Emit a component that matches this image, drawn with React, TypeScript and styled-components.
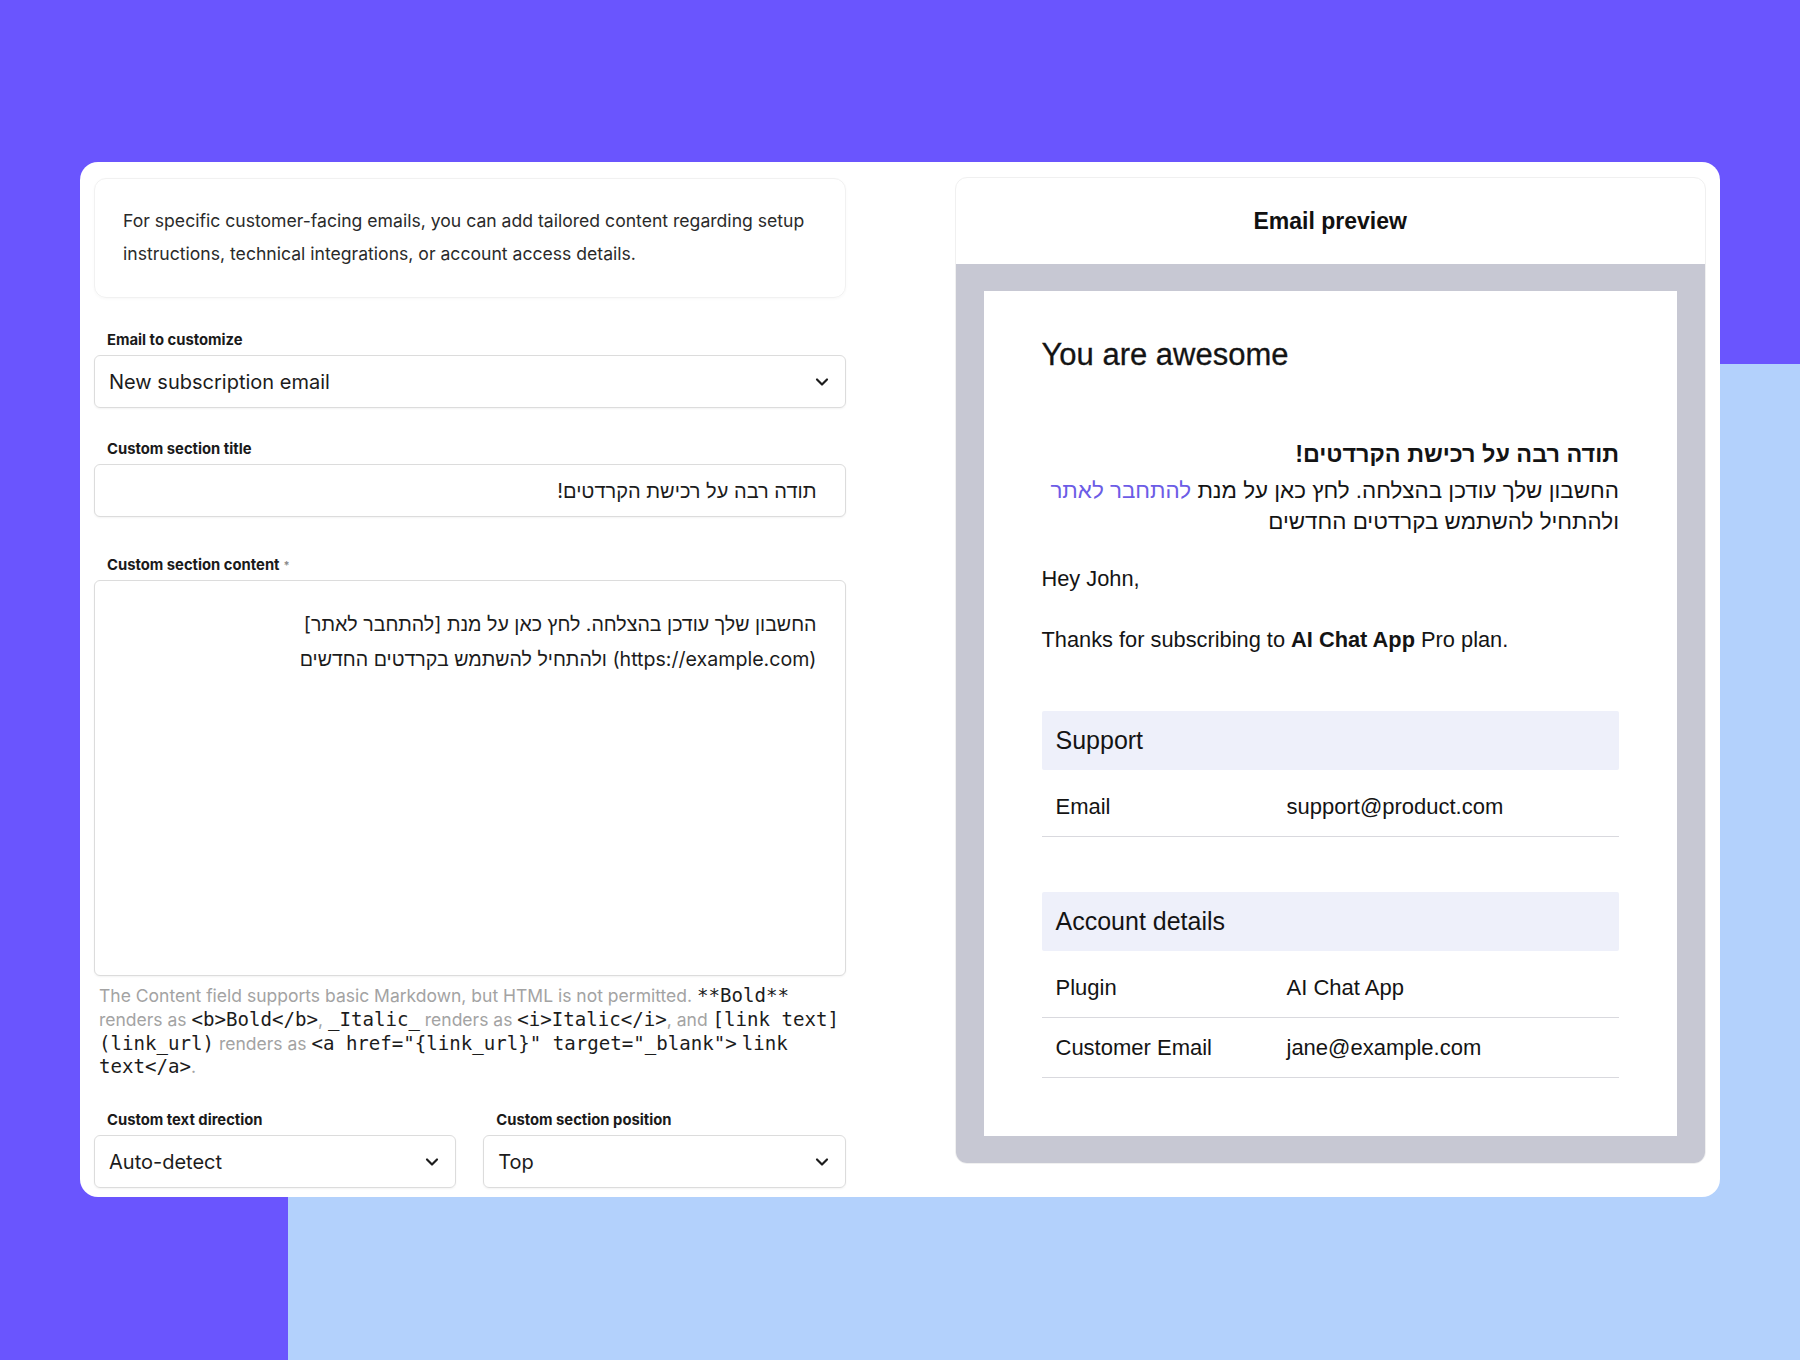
import React from 'react'
import styled, { createGlobalStyle } from 'styled-components'
import { ChevronDown } from 'lucide-react'

const GlobalStyle = createGlobalStyle`
  * {
    box-sizing: border-box;
  }

  body {
    margin: 0;
    min-height: 1360px;
    font-family: Inter, 'Liberation Sans', 'DejaVu Sans', sans-serif;
    color: #151515;
    background:
      linear-gradient(#b3d1fc, #b3d1fc) no-repeat 288px 364px / calc(100% - 288px) calc(100% - 364px),
      #6a55fe;
  }
`

const Page = styled.div`
  padding: 162px 80px 0;
`

const Card = styled.div`
  width: 1640px;
  height: 1035px;
  background: #fff;
  border-radius: 18px;
  padding: 16px 14px 10px;
  display: grid;
  grid-template-columns: 1fr 1fr;
  column-gap: 109px;
  align-items: start;
`

const FormColumn = styled.div`
  display: flex;
  flex-direction: column;
`

const InfoBox = styled.div`
  border: 1px solid #f1f1f1;
  border-radius: 12px;
  padding: 25px 28px 27px;
  font-size: 17.6px;
  line-height: 33px;
  color: #2a2a2a;
  box-shadow: 0 1px 3px rgba(0, 0, 0, 0.03);
`

const Field = styled.div<{ $gap?: number }>`
  display: flex;
  flex-direction: column;
  margin-top: ${(p) => p.$gap ?? 32}px;
  min-width: 0;
`

const Label = styled.label`
  font-size: 14.8px;
  font-weight: 700;
  line-height: 18px;
  color: #1a1a1a;
  padding-left: 13px;
  margin-bottom: 6px;
`

const Required = styled.span`
  color: #8a8a8a;
  font-size: 11px;
  vertical-align: top;
  margin-left: 4px;
`

const SelectBox = styled.div`
  height: 53px;
  border: 1px solid #dcdcdc;
  border-radius: 6px;
  padding: 0 13px 0 14px;
  display: flex;
  align-items: center;
  justify-content: space-between;
  font-size: 20px;
  color: #1c1c1c;
  box-shadow: 0 1px 2px rgba(0, 0, 0, 0.05);
`

const TextInput = styled.input`
  height: 53px;
  border: 1px solid #dcdcdc;
  border-radius: 6px;
  padding: 0 28px;
  font-family: Inter, 'Liberation Sans', sans-serif;
  font-size: 20px;
  color: #1c1c1c;
  outline: none;
  box-shadow: 0 1px 2px rgba(0, 0, 0, 0.05);
`

const TextArea = styled.textarea`
  height: 396px;
  border: 1px solid #dcdcdc;
  border-radius: 6px;
  padding: 26px 28px;
  font-family: Inter, 'Liberation Sans', sans-serif;
  font-size: 19.6px;
  line-height: 35px;
  color: #1c1c1c;
  resize: none;
  outline: none;
  box-shadow: 0 1px 2px rgba(0, 0, 0, 0.05);
`

const Hint = styled.p`
  margin: 8px -10px 0 0;
  padding-left: 5px;
  font-size: 17.5px;
  line-height: 23.8px;
  color: #a3a3a3;
`

const Code = styled.code`
  font-family: 'DejaVu Sans Mono', 'Liberation Mono', monospace;
  font-size: 19.1px;
  line-height: 1;
  color: #1c1c1c;
`

const FieldRow = styled.div`
  display: grid;
  grid-template-columns: 1fr 1fr;
  column-gap: 27px;
`

const PreviewPanel = styled.div`
  border: 1px solid #f0f0f0;
  border-radius: 12px;
  overflow: hidden;
  margin-top: -1px;
`

const PreviewHeader = styled.div`
  height: 86px;
  display: flex;
  align-items: center;
  justify-content: center;
  font-family: 'Liberation Sans', Arial, sans-serif;
  font-size: 23px;
  font-weight: 700;
  color: #111;
`

const PreviewCanvas = styled.div`
  background: #c7c8d3;
  padding: 27px 28px;
`

const EmailBody = styled.div`
  background: #fff;
  height: 845px;
  padding: 46px 58px 0;
  font-family: 'Liberation Sans', Arial, sans-serif;
  color: #141414;
`

const EmailTitle = styled.h1`
  margin: 0;
  font-size: 31px;
  line-height: 36px;
  font-weight: 400;
  -webkit-text-stroke: 0.3px #141414;
`

const RtlBlock = styled.div`
  direction: rtl;
  text-align: right;
  margin-top: 64px;
`

const RtlTitle = styled.div`
  font-size: 23.4px;
  font-weight: 700;
  line-height: 34px;
  margin-bottom: 4px;
`

const RtlText = styled.p`
  margin: 0;
  font-size: 22.4px;
  line-height: 31px;
`

const Link = styled.a`
  color: #6c5ce6;
  text-decoration: none;
`

const Paragraph = styled.p<{ $top: number }>`
  margin: ${(p) => p.$top}px 0 0;
  font-size: 21.8px;
  line-height: 30px;
`

const Table = styled.div<{ $top: number }>`
  margin-top: ${(p) => p.$top}px;
`

const TableHead = styled.div`
  height: 59px;
  background: #eef0fa;
  border-radius: 2px;
  padding: 0 14px;
  display: flex;
  align-items: center;
  font-size: 25px;
  margin-bottom: 7px;
`

const TableRow = styled.div`
  height: 60px;
  padding: 0 14px;
  display: grid;
  grid-template-columns: 231px 1fr;
  align-items: center;
  border-bottom: 1.5px solid #d9d9de;
  font-size: 22px;
`

const Select: React.FC<{ value: string }> = ({ value }) => (
  <SelectBox>
    <span>{value}</span>
    <ChevronDown size={20} strokeWidth={2.6} color="#1c1c1c" />
  </SelectBox>
)

const rows = {
  support: [['Email', 'support@product.com']],
  account: [
    ['Plugin', 'AI Chat App'],
    ['Customer Email', 'jane@example.com'],
  ],
}

const contentValue =
  'החשבון שלך עודכן בהצלחה. לחץ כאן על מנת [להתחבר לאתר](https://example.com) ולהתחיל להשתמש בקרדטים החדשים'

export default function App() {
  return (
    <>
      <GlobalStyle />
      <Page>
        <Card>
          <FormColumn>
            <InfoBox>
              For specific customer-facing emails, you can add tailored content regarding setup
              instructions, technical integrations, or account access details.
            </InfoBox>

            <Field $gap={33}>
              <Label>Email to customize</Label>
              <Select value="New subscription email" />
            </Field>

            <Field>
              <Label>Custom section title</Label>
              <TextInput dir="rtl" defaultValue="תודה רבה על רכישת הקרדטים!" />
            </Field>

            <Field $gap={39}>
              <Label>
                Custom section content<Required>*</Required>
              </Label>
              <TextArea dir="rtl" defaultValue={contentValue} />
              <Hint>
                The Content field supports basic Markdown, but HTML is not permitted.{' '}
                <Code>**Bold**</Code> renders as <Code>&lt;b&gt;Bold&lt;/b&gt;</Code>,{' '}
                <Code>_Italic_</Code> renders as <Code>&lt;i&gt;Italic&lt;/i&gt;</Code>, and{' '}
                <Code>[link&nbsp;text]</Code>
                <wbr />
                <Code>(link_url)</Code> renders as{' '}
                <Code>&lt;a href="{'{link_url}'}" target="_blank"&gt;</Code> <Code>link</Code>{' '}
                <Code>text&lt;/a&gt;</Code>.
              </Hint>
            </Field>

            <FieldRow>
              <Field>
                <Label>Custom text direction</Label>
                <Select value="Auto-detect" />
              </Field>
              <Field>
                <Label>Custom section position</Label>
                <Select value="Top" />
              </Field>
            </FieldRow>
          </FormColumn>

          <PreviewPanel>
            <PreviewHeader>Email preview</PreviewHeader>
            <PreviewCanvas>
              <EmailBody>
                <EmailTitle>You are awesome</EmailTitle>

                <RtlBlock>
                  <RtlTitle>תודה רבה על רכישת הקרדטים!</RtlTitle>
                  <RtlText>
                    החשבון שלך עודכן בהצלחה. לחץ כאן על מנת{' '}
                    <Link href="#">להתחבר לאתר</Link> ולהתחיל להשתמש בקרדטים החדשים
                  </RtlText>
                </RtlBlock>

                <Paragraph $top={27}>Hey John,</Paragraph>
                <Paragraph $top={31}>
                  Thanks for subscribing to <b>AI Chat App</b> Pro plan.
                </Paragraph>

                <Table $top={56}>
                  <TableHead>Support</TableHead>
                  {rows.support.map(([k, v]) => (
                    <TableRow key={k}>
                      <span>{k}</span>
                      <span>{v}</span>
                    </TableRow>
                  ))}
                </Table>

                <Table $top={55}>
                  <TableHead>Account details</TableHead>
                  {rows.account.map(([k, v]) => (
                    <TableRow key={k}>
                      <span>{k}</span>
                      <span>{v}</span>
                    </TableRow>
                  ))}
                </Table>
              </EmailBody>
            </PreviewCanvas>
          </PreviewPanel>
        </Card>
      </Page>
    </>
  )
}
